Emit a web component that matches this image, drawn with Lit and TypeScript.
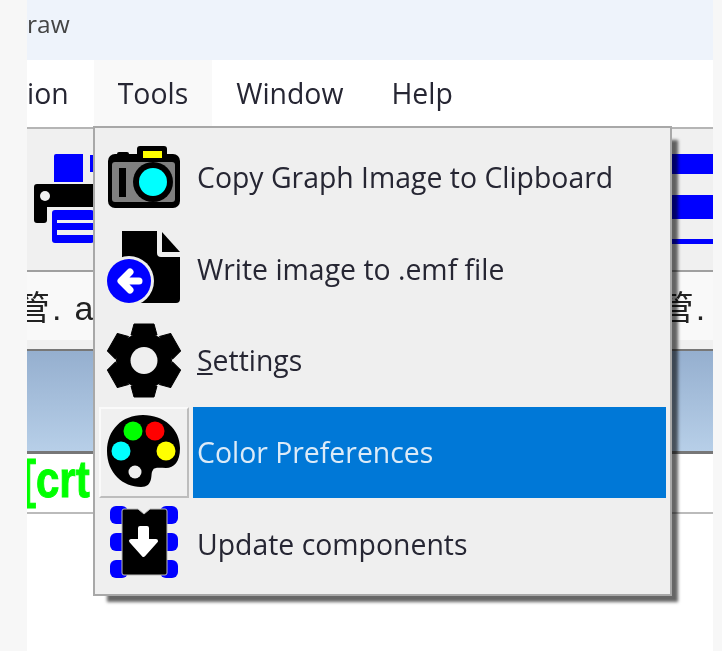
import { LitElement, html, css, svg } from "lit";
import { customElement } from "lit/decorators.js";

const gearTeeth = [0, 60, 120, 180, 240, 300];

const cameraIcon = svg`
  <rect x="0" y="12" width="72" height="54" rx="7" fill="#000" />
  <rect x="9" y="10" width="12" height="8" rx="2" fill="#000" />
  <rect x="29" y="4" width="30" height="16" rx="3" fill="#000" />
  <rect x="35" y="9" width="19" height="7" fill="#ffff00" />
  <rect x="4" y="20" width="63" height="40" rx="3" fill="#808080" />
  <rect x="11" y="26" width="7" height="29" fill="#000" />
  <circle cx="45" cy="40" r="20" fill="#000" />
  <circle cx="45" cy="40" r="14" fill="#00ffff" />
`;

const fileIcon = svg`
  <path d="M14 -2H49V20Q49 24 53 24H72V66Q72 70 68 70H14Z" fill="#000" />
  <path d="M54 -1L72 19H54Z" fill="#000" />
  <circle cx="21" cy="48" r="25" fill="#efefef" />
  <circle cx="21" cy="48" r="22" fill="#0000ff" />
  <path d="M31 48H14M22 39L13 48L22 57" fill="none" stroke="#fff" stroke-width="7" stroke-linecap="round" stroke-linejoin="round" />
`;

const gearIcon = svg`
  <circle cx="36" cy="35.5" r="28" fill="#000" />
  ${gearTeeth.map(
    (a) => svg`<path transform="rotate(${a} 36 35.5)" d="M23 10L26 -1H46L49 10Z" fill="#000" stroke="#000" stroke-linejoin="round" />`
  )}
  <circle cx="36" cy="35.5" r="13.5" fill="#efefef" />
`;

const paletteIcon = svg`
  <path d="M35 -2C56 -2 72 12 72 31C72 45 66 51 58 51C52 51 46 50 45 53C43 56 44 58 43 62C42 67 39 70 33 70C15 70 -1 56 -1 34C-1 13 14 -2 35 -2Z" fill="#000" />
  <circle cx="25" cy="14" r="9.5" fill="#00ff00" />
  <circle cx="47" cy="14" r="9.5" fill="#ff0000" />
  <circle cx="13" cy="34" r="9.5" fill="#00ffff" />
  <circle cx="58" cy="34" r="9.5" fill="#ffff00" />
  <circle cx="27" cy="55" r="6.5" fill="#efefef" />
`;

const chipIcon = svg`
  ${[-2, 25, 52].map(
    (y) => svg`
      <rect x="2" y="${y}" width="18" height="18" rx="6" fill="#0000ff" />
      <rect x="52" y="${y}" width="18" height="18" rx="6" fill="#0000ff" />`
  )}
  <path d="M14 3Q14 1 16 1H30L36 6L42 1H57Q59 1 59 3V65Q59 67 57 67H16Q14 67 14 65Z" fill="#000" stroke="#bbb" stroke-width="1" />
  <path d="M32 20H39V33H48L35.5 47L23 33H32Z" fill="#fff" stroke="#fff" stroke-width="4" stroke-linejoin="round" />
`;

const printerIcon = svg`
  <path d="M20 2Q20 0 22 0H49V28H20Z" fill="#0000ff" />
  <rect x="56" y="1" width="4" height="17" fill="#0000ff" />
  <path d="M0 33Q0 30 3 30H60V53H13V66Q13 69 10 69H3Q0 69 0 66Z" fill="#000" />
  <circle cx="11" cy="42" r="5" fill="#f0f0f0" />
  <rect x="18" y="56" width="42" height="33" rx="3" fill="#0000ff" />
  <rect x="23" y="66" width="37" height="3" fill="#f0f0f0" />
  <rect x="23" y="76" width="37" height="5" fill="#f0f0f0" />
`;

const menuItems = [
  { label: "Copy Graph Image to Clipboard", icon: cameraIcon },
  { label: "Write image to .emf file", icon: fileIcon },
  { label: html`<u>S</u>ettings`, icon: gearIcon },
  { label: "Color Preferences", icon: paletteIcon, active: true },
  { label: "Update components", icon: chipIcon },
];

@customElement("app-root")
export class AppRoot extends LitElement {
  static styles = css`
    :host {
      display: flex;
      height: 651px;
      overflow: hidden;
      background: #f7f7f7;
      font-family: "Open Sans", sans-serif;
      filter: blur(0.45px);
    }

    .window {
      position: relative;
      width: 686px;
      margin-left: 27px;
      background: #fff;
      overflow: hidden;
    }

    .title {
      height: 60px;
      background: #eef3fb;
      color: #444;
      font-size: 24.5px;
      line-height: 47px;
    }

    .menubar {
      display: flex;
      height: 67px;
      background: #fff;
      color: #262633;
      font-size: 28.4px;
      line-height: 66px;
    }
    .menubar span {
      padding: 0 24px;
    }
    .menubar .clipped {
      padding: 0 25px 0 0;
    }
    .menubar .hover {
      background: #f9f9f9;
    }

    .toolbar {
      display: flex;
      justify-content: space-between;
      height: 145px;
      background: #f0f0f0;
      border-top: 2px solid #b5b5b5;
      border-bottom: 2px solid #a0a0a0;
      box-sizing: border-box;
      padding: 25px 0 0 7px;
    }
    .toolbar svg {
      display: block;
    }
    .bars {
      display: flex;
      flex-direction: column;
      width: 42px;
    }
    .bars i {
      background: #0000ff;
    }
    .bars .a {
      height: 20px;
    }
    .bars .b {
      height: 24px;
      margin-top: 21px;
    }
    .bars .c {
      height: 5px;
      margin-top: 20px;
    }

    .tabs {
      display: flex;
      justify-content: space-between;
      height: 77px;
      background: #f9f9f9;
      border-bottom: 9px solid #f0f0f0;
      box-sizing: border-box;
      overflow: hidden;
      color: #222;
      font-family: "Liberation Sans", "Noto Sans CJK SC", sans-serif;
      font-size: 34px;
      letter-spacing: 13px;
      line-height: 72px;
      white-space: nowrap;
    }
    .tabs b {
      font-weight: 400;
      letter-spacing: 2px;
    }
    .tabs .left {
      margin-left: -11px;
    }
    .tabs .right {
      margin-right: -37px;
    }

    .band {
      height: 105px;
      background: linear-gradient(#95afcf, #b7cfe8);
      border-top: 2px solid #777;
      border-bottom: 3px solid #777;
      box-sizing: border-box;
    }

    .row {
      height: 60px;
      border-bottom: 2px solid #bbb;
      box-sizing: border-box;
      color: #00ff00;
      font-family: "Liberation Sans", sans-serif;
      font-size: 42px;
      font-weight: 700;
      line-height: 52px;
      white-space: nowrap;
      -webkit-text-stroke: 0.8px #00ff00;
    }
    .row span {
      display: inline-block;
      margin-left: -5px;
      transform: scaleY(1.22);
    }

    .menu {
      position: absolute;
      left: 66px;
      top: 126px;
      width: 579px;
      height: 470px;
      box-sizing: border-box;
      padding: 4px;
      background: #efefef;
      border: 2px solid #a8a8a8;
      box-shadow: 10px 10px 3px -4px rgba(0, 0, 0, 0.6);
      display: grid;
      grid-auto-rows: 91.6px;
      color: #262633;
      font-size: 28.4px;
    }
    .item {
      display: grid;
      grid-template-columns: 90px 1fr;
      column-gap: 4px;
      align-items: stretch;
    }
    .icon {
      display: flex;
      align-items: center;
      justify-content: center;
      box-sizing: border-box;
    }
    .icon svg {
      overflow: visible;
      display: block;
    }
    .label {
      display: flex;
      align-items: center;
      padding: 0 0 1px 4px;
    }
    .active .icon {
      background: #f0f0f0;
      border: 2px solid;
      border-color: #fafafa #bdbdbd #bdbdbd #fafafa;
    }
    .active .label {
      background: #0078d7;
      color: #dcebf8;
    }
  `;

  render() {
    return html`
      <div class="window">
        <div class="title">raw</div>
        <div class="menubar">
          <span class="clipped">ion</span>
          <span class="hover">Tools</span>
          <span>Window</span>
          <span>Help</span>
        </div>
        <div class="toolbar">
          <svg width="60" height="92" viewBox="0 0 60 92">${printerIcon}</svg>
          <div class="bars">
            <i class="a"></i>
            <i class="b"></i>
            <i class="c"></i>
          </div>
        </div>
        <div class="tabs">
          <span class="left"><b>管</b>.a</span>
          <span class="right"><b>管</b>.a</span>
        </div>
        <div class="band"></div>
        <div class="row"><span>[crt</span></div>
        <div class="menu">
          ${menuItems.map(
            (item) => html`
              <div class="item ${item.active ? "active" : ""}">
                <div class="icon">
                  <svg width="72" height="72" viewBox="0 0 72 72">${item.icon}</svg>
                </div>
                <div class="label"><span>${item.label}</span></div>
              </div>
            `
          )}
        </div>
      </div>
    `;
  }
}
